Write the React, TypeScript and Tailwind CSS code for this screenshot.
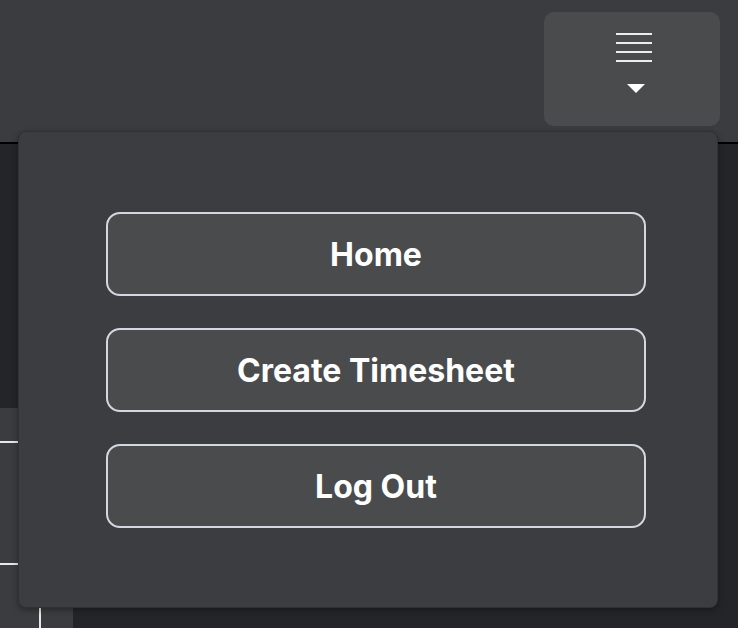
import React from 'react';

const ITEMS = ['Home', 'Create Timesheet', 'Log Out'];

export default function App() {
  return (
    <div
      className="relative w-[738px] h-[628px] overflow-hidden bg-[#242528]"
      style={{ fontFamily: 'Inter, "Noto Sans", sans-serif' }}
    >
      {/* Header */}
      <div className="h-[144px] bg-[#3b3c3f] border-b-2 border-black flex justify-end items-start pt-[12px] pr-[18px]">
        <button className="w-[176px] h-[114px] rounded-[10px] bg-[#4a4b4d] flex flex-col items-center pt-[21px]">
          <div className="flex flex-col gap-[7px] ml-[4px]">
            <span className="block w-[36px] h-[2px] bg-[#ececec]" />
            <span className="block w-[36px] h-[2px] bg-[#ececec]" />
            <span className="block w-[36px] h-[2px] bg-[#ececec]" />
            <span className="block w-[36px] h-[2px] bg-[#ececec]" />
          </div>
          <svg width="18" height="9" viewBox="0 0 18 9" className="mt-[22px] ml-[8px]">
            <polygon points="0,0 18,0 9,9" fill="#ffffff" />
          </svg>
        </button>
      </div>

      {/* Page behind the menu */}
      <div className="flex">
        <div className="w-[73px] flex flex-col">
          <div className="h-[264px] bg-[#242528]" />
          <div className="h-[220px] bg-[#3b3c3f] flex flex-col">
            <div className="h-[33px]" />
            <div className="h-[2px] w-[20px] bg-[#e8e8e8]" />
            <div className="h-[120px]" />
            <div className="h-[2px] w-[20px] bg-[#e8e8e8]" />
            <div className="flex-1 ml-[39px] border-l-2 border-[#e8e8e8] mt-[43px]" />
          </div>
        </div>
      </div>

      {/* Dropdown panel */}
      <div className="absolute left-[18px] top-[131px] w-[700px] h-[477px] rounded-[8px] bg-[#3c3d40] border border-[#303134] shadow-[0_2px_6px_rgba(0,0,0,0.35)] pl-[87px] pt-[80px] flex flex-col gap-[32px]">
        {ITEMS.map(label => (
          <button
            key={label}
            className="w-[540px] h-[84px] rounded-[14px] border-2 border-[#d3d7e0] bg-[#4a4b4d] text-white text-[32px] font-bold flex items-center justify-center pt-[2px]"
          >
            {label}
          </button>
        ))}
      </div>
    </div>
  );
}
